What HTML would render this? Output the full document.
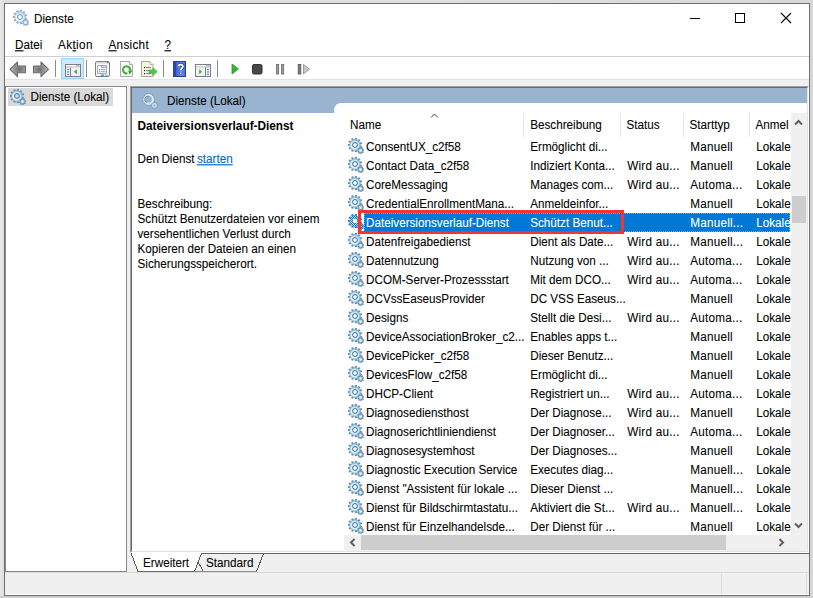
<!DOCTYPE html><html><head><meta charset="utf-8"><style>
html,body{margin:0;padding:0;}
body{width:813px;height:598px;position:relative;overflow:hidden;background:#ececec;font-family:"Liberation Sans",sans-serif;font-size:11.7px;color:#000;}
.a{position:absolute;box-sizing:border-box;}
.t{position:absolute;white-space:nowrap;line-height:13px;transform-origin:0 10.6px;transform:scaleY(1.15);-webkit-text-stroke:0.08px currentColor;}
.ic{position:absolute;}
.sel{color:#fff;}
u{text-decoration:none;border-bottom:1px solid currentColor;}
</style></head><body>
<svg width="0" height="0" style="position:absolute">
<defs>
<radialGradient id="gg" cx="0.45" cy="0.55" r="0.55"><stop offset="0" stop-color="#ffffff"/><stop offset="0.6" stop-color="#d2f1fb"/><stop offset="1" stop-color="#94bcd8"/></radialGradient>
<radialGradient id="gs" cx="0.45" cy="0.45" r="0.6"><stop offset="0" stop-color="#dff1fa"/><stop offset="1" stop-color="#7aa2c0"/></radialGradient>
<symbol id="gear" viewBox="0 0 16 16">
<path d="M11.80,7.00 L11.78,7.38 L14.14,7.93 L13.51,10.07 L11.23,9.26 L11.04,9.60 L10.82,9.91 L12.50,11.64 L10.81,13.11 L9.34,11.19 L8.99,11.37 L8.64,11.51 L9.12,13.88 L6.91,14.20 L6.70,11.79 L6.32,11.75 L5.94,11.68 L5.06,13.93 L3.03,13.01 L4.16,10.87 L3.86,10.63 L3.58,10.36 L1.62,11.78 L0.41,9.91 L2.52,8.72 L2.39,8.35 L2.30,7.98 L-0.11,8.12 L-0.11,5.88 L2.30,6.02 L2.39,5.65 L2.52,5.28 L0.41,4.09 L1.62,2.22 L3.58,3.64 L3.86,3.37 L4.16,3.13 L3.03,0.99 L5.06,0.07 L5.94,2.32 L6.32,2.25 L6.70,2.21 L6.91,-0.20 L9.12,0.12 L8.64,2.49 L8.99,2.63 L9.34,2.81 L10.81,0.89 L12.50,2.36 L10.82,4.09 L11.04,4.40 L11.23,4.74 L13.51,3.93 L14.14,6.07 L11.78,6.62Z M4.6,7 a2.4,2.4 0 1 0 4.8,0 a2.4,2.4 0 1 0 -4.8,0 Z" fill="#6890b2" fill-rule="evenodd"/>
<path d="M1.6,7 a5.4,5.4 0 1 0 10.8,0 a5.4,5.4 0 1 0 -10.8,0 Z M4.6,7 a2.4,2.4 0 1 0 4.8,0 a2.4,2.4 0 1 0 -4.8,0 Z" fill="url(#gg)" fill-rule="evenodd" stroke="#7a9fbd" stroke-width="0.5"/>
<circle cx="7" cy="7" r="2.4" fill="none" stroke="#46709a" stroke-width="0.9"/>
<path d="M14.95,13.08 L14.83,13.48 L15.88,14.09 L15.21,15.08 L14.26,14.34 L13.93,14.60 L13.55,14.80 L13.86,15.97 L12.70,16.20 L12.54,15.00 L12.12,14.95 L11.72,14.83 L11.11,15.88 L10.12,15.21 L10.86,14.26 L10.60,13.93 L10.40,13.55 L9.23,13.86 L9.00,12.70 L10.20,12.54 L10.25,12.12 L10.37,11.72 L9.32,11.11 L9.99,10.12 L10.94,10.86 L11.27,10.60 L11.65,10.40 L11.34,9.23 L12.50,9.00 L12.66,10.20 L13.08,10.25 L13.48,10.37 L14.09,9.32 L15.08,9.99 L14.34,10.94 L14.60,11.27 L14.80,11.65 L15.97,11.34 L16.20,12.50 L15.00,12.66Z" fill="#5f88ac"/>
<circle cx="12.6" cy="12.6" r="2.5" fill="url(#gs)" stroke="#5f88ac" stroke-width="0.7"/>
<circle cx="12.6" cy="12.6" r="0.9" fill="#fff"/>
</symbol>
<pattern id="chk" patternUnits="userSpaceOnUse" width="2" height="2"><rect x="0" y="0" width="1" height="1" fill="#0078d7"/><rect x="1" y="1" width="1" height="1" fill="#0078d7"/></pattern>
<symbol id="gearsel" viewBox="0 0 16 16">
<use href="#gear"/>
<path d="M11.80,7.00 L11.78,7.38 L14.14,7.93 L13.51,10.07 L11.23,9.26 L11.04,9.60 L10.82,9.91 L12.50,11.64 L10.81,13.11 L9.34,11.19 L8.99,11.37 L8.64,11.51 L9.12,13.88 L6.91,14.20 L6.70,11.79 L6.32,11.75 L5.94,11.68 L5.06,13.93 L3.03,13.01 L4.16,10.87 L3.86,10.63 L3.58,10.36 L1.62,11.78 L0.41,9.91 L2.52,8.72 L2.39,8.35 L2.30,7.98 L-0.11,8.12 L-0.11,5.88 L2.30,6.02 L2.39,5.65 L2.52,5.28 L0.41,4.09 L1.62,2.22 L3.58,3.64 L3.86,3.37 L4.16,3.13 L3.03,0.99 L5.06,0.07 L5.94,2.32 L6.32,2.25 L6.70,2.21 L6.91,-0.20 L9.12,0.12 L8.64,2.49 L8.99,2.63 L9.34,2.81 L10.81,0.89 L12.50,2.36 L10.82,4.09 L11.04,4.40 L11.23,4.74 L13.51,3.93 L14.14,6.07 L11.78,6.62Z M4.6,7 a2.4,2.4 0 1 0 4.8,0 a2.4,2.4 0 1 0 -4.8,0 Z" fill="url(#chk)" fill-rule="evenodd"/>
<path d="M1.6,7 a5.4,5.4 0 1 0 10.8,0 a5.4,5.4 0 1 0 -10.8,0 Z M4.6,7 a2.4,2.4 0 1 0 4.8,0 a2.4,2.4 0 1 0 -4.8,0 Z" fill="url(#chk)" fill-rule="evenodd"/>
<path d="M14.95,13.08 L14.83,13.48 L15.88,14.09 L15.21,15.08 L14.26,14.34 L13.93,14.60 L13.55,14.80 L13.86,15.97 L12.70,16.20 L12.54,15.00 L12.12,14.95 L11.72,14.83 L11.11,15.88 L10.12,15.21 L10.86,14.26 L10.60,13.93 L10.40,13.55 L9.23,13.86 L9.00,12.70 L10.20,12.54 L10.25,12.12 L10.37,11.72 L9.32,11.11 L9.99,10.12 L10.94,10.86 L11.27,10.60 L11.65,10.40 L11.34,9.23 L12.50,9.00 L12.66,10.20 L13.08,10.25 L13.48,10.37 L14.09,9.32 L15.08,9.99 L14.34,10.94 L14.60,11.27 L14.80,11.65 L15.97,11.34 L16.20,12.50 L15.00,12.66Z" fill="url(#chk)"/>
<circle cx="12.6" cy="12.6" r="2.5" fill="url(#chk)"/>
<circle cx="7" cy="7" r="2.3" fill="#fff"/>
</symbol>
</defs></svg><div class="a" style="left:0;top:0;width:813px;height:598px;background:linear-gradient(90deg,#e8e8e8,#dedede 4px,#e0e0e0 50%,#d8d8d8)"></div>
<div class="a" style="left:810px;top:0;width:3px;height:598px;background:#d6d6d6"></div>
<div class="a" style="left:0;top:596px;width:813px;height:2px;background:#cdcdcd"></div>
<div class="a" style="left:4px;top:3px;width:806px;height:593px;border:1px solid #6f6f6f;background:#fff"></div>
<svg class="ic" style="left:13px;top:10px;opacity:0.75" width="16" height="16"><use href="#gear"/></svg>
<div class="t" style="left:34px;top:12.1px;">Dienste</div>
<div class="a" style="left:690px;top:18px;width:10px;height:1px;background:#000"></div>
<div class="a" style="left:735px;top:13px;width:10px;height:10px;border:1px solid #000"></div>
<svg class="ic" style="left:780px;top:12px" width="12" height="12"><path d="M1,1 L11,11 M11,1 L1,11" stroke="#000" stroke-width="1.1"/></svg>
<div class="t" style="left:15px;top:38.0px;"><span style="text-decoration:underline;text-underline-offset:1px">D</span>atei</div>
<div class="t" style="left:58px;top:38.0px;"><span style="letter-spacing:0.4px">Ak<span style="text-decoration:underline;text-underline-offset:1px">t</span>ion</span></div>
<div class="t" style="left:108.5px;top:38.0px;"><span style="letter-spacing:0.3px"><span style="text-decoration:underline;text-underline-offset:1px">A</span>nsicht</span></div>
<div class="t" style="left:164.5px;top:38.0px;"><span style="text-decoration:underline;text-underline-offset:1px">?</span></div>
<div class="a" style="left:5px;top:56px;width:804px;height:1px;background:#cfcfcf"></div>
<div class="a" style="left:5px;top:79px;width:804px;height:1px;background:#e3e3e3"></div>
<div class="a" style="left:5px;top:80px;width:804px;height:515px;background:#f0f0f0"></div>
<div class="a" style="left:5px;top:594px;width:804px;height:1px;background:#fff"></div>
<svg class="ic" style="left:9px;top:61px" width="42" height="17">
<defs><radialGradient id="ag" cx="0.6" cy="0.5" r="0.6"><stop offset="0" stop-color="#6f6f6f"/><stop offset="0.6" stop-color="#9a9a9a"/><stop offset="1" stop-color="#d4d4d4"/></radialGradient><radialGradient id="ag2" cx="0.4" cy="0.5" r="0.6"><stop offset="0" stop-color="#6f6f6f"/><stop offset="0.6" stop-color="#9a9a9a"/><stop offset="1" stop-color="#d4d4d4"/></radialGradient></defs>
<path d="M1,8.3 L8.5,1 L8.5,5 L16.5,5 L16.5,11.8 L8.5,11.8 L8.5,15.7 Z" fill="url(#ag)" stroke="#6a6a6a" stroke-width="1.1" stroke-linejoin="round"/>
<path d="M39.5,8.3 L32,1 L32,5 L24.5,5 L24.5,11.8 L32,11.8 L32,15.7 Z" fill="url(#ag2)" stroke="#6a6a6a" stroke-width="1.1" stroke-linejoin="round"/>
</svg>
<div class="a" style="left:55px;top:60px;width:1px;height:17px;background:#8c8c8c"></div>
<div class="a" style="left:86px;top:60px;width:1px;height:17px;background:#8c8c8c"></div>
<div class="a" style="left:163px;top:60px;width:1px;height:17px;background:#8c8c8c"></div>
<div class="a" style="left:217px;top:60px;width:1px;height:17px;background:#8c8c8c"></div>
<div class="a" style="left:61px;top:58px;width:23px;height:21px;background:#cce8ff;border:1px solid #99d1ff"></div>
<svg class="ic" style="left:65px;top:64px" width="16" height="13">
<rect x="0.5" y="0.5" width="15" height="12" fill="#fff" stroke="#7a7f88"/>
<rect x="1" y="2.6" width="14" height="0.9" fill="#9aa0a8"/>
<rect x="11.5" y="1.2" width="1" height="1" fill="#6a6f78"/><rect x="13.3" y="1.2" width="1" height="1" fill="#6a6f78"/>
<rect x="6" y="3.5" width="9" height="8.5" fill="#f1f1f1"/>
<line x1="5.5" y1="3.5" x2="5.5" y2="12" stroke="#7a7f88"/>
<rect x="2" y="5" width="2.2" height="1.1" fill="#3d7fc6"/><rect x="2" y="7.4" width="2.2" height="1.1" fill="#3d7fc6"/><rect x="2" y="9.8" width="2.2" height="1.1" fill="#3d7fc6"/>
<path d="M11.8,5.2 L9,7.7 L11.8,10.2 Z" fill="#3aa83a"/>
</svg>
<svg class="ic" style="left:94px;top:60px" width="17" height="18">
<rect x="1.5" y="1.5" width="14" height="15" rx="1.5" fill="#fbfbfb" stroke="#7b7f87"/>
<rect x="2" y="2" width="13" height="1.6" fill="#d4d8de"/>
<rect x="13" y="1.6" width="1.5" height="1.5" fill="#5a6a86"/>
<path d="M3.5,5.5 L7.5,5.5 L7.5,7.2 L12.5,7.2 L12.5,13.5 L3.5,13.5 Z" fill="#fff" stroke="#9aa0aa" stroke-width="0.9"/>
<rect x="7.5" y="5.5" width="5" height="1.7" fill="#f2f3f5" stroke="#9aa0aa" stroke-width="0.9"/>
<rect x="5" y="9" width="1.3" height="1.3" fill="#22aaf0"/><rect x="7" y="9.2" width="4.5" height="0.9" fill="#8a8f99"/>
<rect x="5" y="11.2" width="1.3" height="1.2" fill="#8a8f99"/><rect x="7" y="11.3" width="4.5" height="0.9" fill="#8a8f99"/>
<rect x="7" y="14.5" width="3.2" height="1.6" fill="#23b0f0"/><rect x="11" y="14.5" width="3" height="1.6" fill="#b8bcc2"/>
</svg>
<svg class="ic" style="left:119px;top:60px" width="16" height="18">
<path d="M1.5,1.5 L10.5,1.5 L13.5,4.5 L13.5,16.5 L1.5,16.5 Z" fill="#fbfbfb" stroke="#a8a8a8"/>
<path d="M10.5,1.5 L10.5,4.5 L13.5,4.5" fill="#fff" stroke="#b0b0b0"/>
<path d="M11.1,10.3 A3.6,3.6 0 1 0 8.4,13.3" fill="none" stroke="#3ab53a" stroke-width="2.1"/>
<path d="M9.2,10.6 L13.6,10.2 L10.6,14.8 Z" fill="#2ea52e"/>
</svg>
<svg class="ic" style="left:140px;top:60px" width="19" height="18">
<path d="M1.5,1.5 L10,1.5 L13,4.5 L13,16.5 L1.5,16.5 Z" fill="#fbf5dc" stroke="#a9a79c"/>
<path d="M10,1.5 L10,4.5 L13,4.5" fill="#fff" stroke="#b5b3a8"/>
<rect x="4" y="7" width="1.2" height="1.2" fill="#2a2a2a"/><rect x="6" y="7.1" width="5" height="1" fill="#7b7ba6"/>
<rect x="4" y="10" width="1.2" height="1.2" fill="#2a2a2a"/><rect x="6" y="10.1" width="5" height="1" fill="#7b7ba6"/>
<rect x="4" y="13" width="1.2" height="1.2" fill="#2a2a2a"/><rect x="6" y="13.1" width="5" height="1" fill="#7b7ba6"/>
<path d="M9,10 L13,10 L13,7.8 L17.2,11.6 L13,15.4 L13,13.2 L9,13.2 Z" fill="#52c852" stroke="#35a535" stroke-width="0.6" stroke-linejoin="round"/>
</svg>
<svg class="ic" style="left:173px;top:61px" width="13" height="16">
<defs><linearGradient id="hg" x1="0" y1="0" x2="1" y2="0"><stop offset="0" stop-color="#3d63c9"/><stop offset="0.6" stop-color="#6f92e4"/><stop offset="1" stop-color="#4a6fd0"/></linearGradient></defs>
<rect x="0" y="0" width="13" height="16" fill="#1f3d9c"/>
<rect x="3" y="1" width="9" height="14" fill="url(#hg)"/>
<rect x="0" y="0" width="3" height="16" fill="#2646a8"/>
<path d="M5.3,5.2 C5.3,3 9.9,3 9.9,5.4 C9.9,7.2 7.7,7.3 7.7,9.6" fill="none" stroke="#203a8a" stroke-width="3"/>
<path d="M5.3,5.2 C5.3,3 9.9,3 9.9,5.4 C9.9,7.2 7.7,7.3 7.7,9.6" fill="none" stroke="#fff" stroke-width="1.7"/>
<circle cx="7.7" cy="12.3" r="1.4" fill="#203a8a"/><circle cx="7.7" cy="12.3" r="0.9" fill="#fff"/>
</svg>
<svg class="ic" style="left:195px;top:64px" width="16" height="13">
<rect x="0.5" y="0.5" width="15" height="12" fill="#fff" stroke="#7a7f88"/>
<rect x="1" y="2.6" width="14" height="0.9" fill="#9aa0a8"/>
<rect x="11.5" y="1.2" width="1" height="1" fill="#6a6f78"/><rect x="13.3" y="1.2" width="1" height="1" fill="#6a6f78"/>
<rect x="1" y="3.5" width="9" height="8.5" fill="#f1f1f1"/>
<line x1="10.5" y1="3.5" x2="10.5" y2="12" stroke="#7a7f88"/>
<rect x="11.8" y="5" width="2.2" height="1.1" fill="#3d7fc6"/><rect x="11.8" y="7.4" width="2.2" height="1.1" fill="#3d7fc6"/><rect x="11.8" y="9.8" width="2.2" height="1.1" fill="#3d7fc6"/>
<path d="M4.2,5.2 L7,7.7 L4.2,10.2 Z" fill="#3aa83a"/>
</svg>
<svg class="ic" style="left:228px;top:62px" width="84" height="14">
<path d="M4,2 L10.5,7 L4,12 Z" fill="#36b336" stroke="#239a23" stroke-width="0.8" stroke-linejoin="round"/>
<rect x="24.5" y="2.5" width="9.5" height="9.5" rx="1.5" fill="#484848" stroke="#333"/>
<rect x="48.5" y="2.5" width="2.2" height="9.5" fill="#9a9a9a" stroke="#6a6a6a" stroke-width="0.8"/>
<rect x="53.5" y="2.5" width="2.2" height="9.5" fill="#9a9a9a" stroke="#6a6a6a" stroke-width="0.8"/>
<rect x="70.2" y="2.5" width="2.6" height="9.5" fill="#7a7a7a" stroke="#555" stroke-width="0.8"/>
<path d="M75.5,2.5 L81.5,7.2 L75.5,12 Z" fill="#c8c8c8" stroke="#8a8a8a" stroke-width="0.8" stroke-linejoin="round"/>
</svg>
<div class="a" style="left:5px;top:86px;width:122px;height:486px;border:1px solid #828790;background:#fff"></div>
<div class="a" style="left:8px;top:88px;width:105px;height:18px;background:#d9d9d9"></div>
<svg class="ic" style="left:10px;top:89px;" width="16" height="16"><use href="#gear"/></svg>
<div class="t" style="left:30.5px;top:90.2px;">Dienste (Lokal)</div>
<div class="a" style="left:130px;top:86px;width:679px;height:467px;border-top:1px solid #a0a0a0;border-left:1px solid #a0a0a0;border-right:1px solid #fff;border-bottom:1px solid #fff"></div>
<div class="a" style="left:131px;top:87px;width:677px;height:465px;border-top:1px solid #696969;border-left:1px solid #696969;border-right:1px solid #e3e3e3;border-bottom:1px solid #e3e3e3;background:#fff"></div>
<div class="a" style="left:132px;top:88px;width:675px;height:25px;background:#99b4d1"></div>
<div class="a" style="left:334px;top:103px;width:473px;height:12px;background:#fff;border-top-left-radius:7px"></div>
<svg class="ic" style="left:140px;top:90px" width="22" height="22">
<path d="M14.00,9.40 L13.95,10.10 L14.90,10.55 L14.63,11.55 L13.59,11.47 L13.28,12.10 L12.88,12.69 L13.48,13.54 L12.74,14.28 L11.89,13.68 L11.30,14.08 L10.67,14.39 L10.75,15.43 L9.75,15.70 L9.30,14.75 L8.60,14.80 L7.90,14.75 L7.45,15.70 L6.45,15.43 L6.53,14.39 L5.90,14.08 L5.31,13.68 L4.46,14.28 L3.72,13.54 L4.32,12.69 L3.92,12.10 L3.61,11.47 L2.57,11.55 L2.30,10.55 L3.25,10.10 L3.20,9.40 L3.25,8.70 L2.30,8.25 L2.57,7.25 L3.61,7.33 L3.92,6.70 L4.32,6.11 L3.72,5.26 L4.46,4.52 L5.31,5.12 L5.90,4.72 L6.53,4.41 L6.45,3.37 L7.45,3.10 L7.90,4.05 L8.60,4.00 L9.30,4.05 L9.75,3.10 L10.75,3.37 L10.67,4.41 L11.30,4.72 L11.89,5.12 L12.74,4.52 L13.48,5.26 L12.88,6.11 L13.28,6.70 L13.59,7.33 L14.63,7.25 L14.90,8.25 L13.95,8.70Z" fill="#7391b4"/>
<circle cx="8.6" cy="9.4" r="5.4" fill="#99b4d1"/>
<circle cx="8.6" cy="9.4" r="4.3" fill="none" stroke="#d6f1fb" stroke-width="2"/>
<path d="M7,12.4 A3.1,3.1 0 0 1 8.6,6.3 L9.5,6.4" fill="none" stroke="#74808f" stroke-width="0.9"/>
<path d="M17.05,15.92 L16.90,16.40 L17.66,16.91 L17.09,17.76 L16.33,17.25 L15.94,17.57 L15.49,17.81 L15.66,18.70 L14.66,18.90 L14.49,18.00 L13.98,17.95 L13.50,17.80 L12.99,18.56 L12.14,17.99 L12.65,17.23 L12.33,16.84 L12.09,16.39 L11.20,16.56 L11.00,15.56 L11.90,15.39 L11.95,14.88 L12.10,14.40 L11.34,13.89 L11.91,13.04 L12.67,13.55 L13.06,13.23 L13.51,12.99 L13.34,12.10 L14.34,11.90 L14.51,12.80 L15.02,12.85 L15.50,13.00 L16.01,12.24 L16.86,12.81 L16.35,13.57 L16.67,13.96 L16.91,14.41 L17.80,14.24 L18.00,15.24 L17.10,15.41Z" fill="#6f8db0"/>
<circle cx="14.5" cy="15.4" r="2.6" fill="#99b4d1"/>
<circle cx="14.5" cy="15.4" r="1.8" fill="none" stroke="#cfe6f2" stroke-width="1.1"/>
</svg>
<div class="t" style="left:167px;top:94.0px;">Dienste (Lokal)</div>
<div class="t" style="left:137.5px;top:120.2px;font-weight:bold;font-size:11.8px;-webkit-text-stroke:0">Dateiversionsverlauf-Dienst</div>
<div class="t" style="left:137.5px;top:151.8px;"><span style="word-spacing:-0.8px">Den Dienst </span><span style="color:#0066cc;text-decoration:underline">starten</span></div>
<div class="t" style="left:137.5px;top:197.2px;">Beschreibung:</div>
<div class="t" style="left:137.5px;top:212.2px;">Schützt Benutzerdateien vor einem</div>
<div class="t" style="left:137.5px;top:227.2px;">versehentlichen Verlust durch</div>
<div class="t" style="left:137.5px;top:242.2px;">Kopieren der Dateien an einen</div>
<div class="t" style="left:137.5px;top:257.2px;">Sicherungsspeicherort.</div>
<div class="t" style="left:350px;top:117.9px;">Name</div>
<svg class="ic" style="left:430px;top:112px" width="10" height="7"><path d="M1,5.5 L4.5,2 L8,5.5" fill="none" stroke="#3a3a3a" stroke-width="1"/></svg>
<div class="a" style="left:523px;top:113px;width:1px;height:24px;background:#e5e5e5"></div>
<div class="a" style="left:620px;top:113px;width:1px;height:24px;background:#e5e5e5"></div>
<div class="a" style="left:683px;top:113px;width:1px;height:24px;background:#e5e5e5"></div>
<div class="a" style="left:749px;top:113px;width:1px;height:24px;background:#e5e5e5"></div>
<div class="t" style="left:530.2px;top:117.9px;">Beschreibung</div>
<div class="t" style="left:626.5px;top:117.9px;">Status</div>
<div class="t" style="left:689.5px;top:117.9px;">Starttyp</div>
<div class="t" style="left:755.5px;top:117.9px;">Anmel</div>
<div class="a" style="left:344px;top:137px;width:447px;height:398px;overflow:hidden">
<svg class="ic" style="left:4px;top:1px;" width="16" height="16"><use href="#gear"/></svg>
<div class="t" style="left:22.0px;top:3.2px;">ConsentUX_c2f58</div>
<div class="t" style="left:186.20000000000005px;top:3.2px;">Ermöglicht di...</div>
<div class="t" style="left:346.2px;top:3.2px;letter-spacing:0.25px;">Manuell</div>
<div class="t" style="left:412.2px;top:3.2px;">Lokale</div>
<svg class="ic" style="left:4px;top:20px;" width="16" height="16"><use href="#gear"/></svg>
<div class="t" style="left:22.0px;top:22.2px;">Contact Data_c2f58</div>
<div class="t" style="left:186.20000000000005px;top:22.2px;">Indiziert Konta...</div>
<div class="t" style="left:283.2px;top:22.2px;letter-spacing:0.25px;">Wird au...</div>
<div class="t" style="left:346.2px;top:22.2px;letter-spacing:0.25px;">Manuell</div>
<div class="t" style="left:412.2px;top:22.2px;">Lokale</div>
<svg class="ic" style="left:4px;top:39px;" width="16" height="16"><use href="#gear"/></svg>
<div class="t" style="left:22.0px;top:41.2px;">CoreMessaging</div>
<div class="t" style="left:186.20000000000005px;top:41.2px;">Manages com...</div>
<div class="t" style="left:283.2px;top:41.2px;letter-spacing:0.25px;">Wird au...</div>
<div class="t" style="left:346.2px;top:41.2px;letter-spacing:0.25px;">Automa...</div>
<div class="t" style="left:412.2px;top:41.2px;">Lokale</div>
<svg class="ic" style="left:4px;top:58px;" width="16" height="16"><use href="#gear"/></svg>
<div class="t" style="left:22.0px;top:60.2px;">CredentialEnrollmentMana...</div>
<div class="t" style="left:186.20000000000005px;top:60.2px;">Anmeldeinfor...</div>
<div class="t" style="left:346.2px;top:60.2px;letter-spacing:0.25px;">Manuell</div>
<div class="t" style="left:412.2px;top:60.2px;">Lokale</div>
<div class="a" style="left:20px;top:76px;width:426px;height:19px;background:#0078d7;outline:1px dotted #ff8728;outline-offset:-1px"></div>
<svg class="ic" style="left:4px;top:77px;" width="16" height="16"><use href="#gearsel"/></svg>
<div class="t sel" style="left:22.0px;top:79.2px;">Dateiversionsverlauf-Dienst</div>
<div class="t sel" style="left:186.20000000000005px;top:79.2px;">Schützt Benut...</div>
<div class="t sel" style="left:346.2px;top:79.2px;letter-spacing:0.25px;">Manuell...</div>
<div class="t sel" style="left:412.2px;top:79.2px;">Lokale</div>
<svg class="ic" style="left:4px;top:96px;" width="16" height="16"><use href="#gear"/></svg>
<div class="t" style="left:22.0px;top:98.2px;">Datenfreigabedienst</div>
<div class="t" style="left:186.20000000000005px;top:98.2px;">Dient als Date...</div>
<div class="t" style="left:283.2px;top:98.2px;letter-spacing:0.25px;">Wird au...</div>
<div class="t" style="left:346.2px;top:98.2px;letter-spacing:0.25px;">Manuell...</div>
<div class="t" style="left:412.2px;top:98.2px;">Lokale</div>
<svg class="ic" style="left:4px;top:115px;" width="16" height="16"><use href="#gear"/></svg>
<div class="t" style="left:22.0px;top:117.2px;">Datennutzung</div>
<div class="t" style="left:186.20000000000005px;top:117.2px;">Nutzung von ...</div>
<div class="t" style="left:283.2px;top:117.2px;letter-spacing:0.25px;">Wird au...</div>
<div class="t" style="left:346.2px;top:117.2px;letter-spacing:0.25px;">Automa...</div>
<div class="t" style="left:412.2px;top:117.2px;">Lokale</div>
<svg class="ic" style="left:4px;top:134px;" width="16" height="16"><use href="#gear"/></svg>
<div class="t" style="left:22.0px;top:136.2px;">DCOM-Server-Prozessstart</div>
<div class="t" style="left:186.20000000000005px;top:136.2px;">Mit dem DCO...</div>
<div class="t" style="left:283.2px;top:136.2px;letter-spacing:0.25px;">Wird au...</div>
<div class="t" style="left:346.2px;top:136.2px;letter-spacing:0.25px;">Automa...</div>
<div class="t" style="left:412.2px;top:136.2px;">Lokale</div>
<svg class="ic" style="left:4px;top:153px;" width="16" height="16"><use href="#gear"/></svg>
<div class="t" style="left:22.0px;top:155.2px;">DCVssEaseusProvider</div>
<div class="t" style="left:186.20000000000005px;top:155.2px;">DC VSS Easeus...</div>
<div class="t" style="left:346.2px;top:155.2px;letter-spacing:0.25px;">Manuell</div>
<div class="t" style="left:412.2px;top:155.2px;">Lokale</div>
<svg class="ic" style="left:4px;top:172px;" width="16" height="16"><use href="#gear"/></svg>
<div class="t" style="left:22.0px;top:174.2px;">Designs</div>
<div class="t" style="left:186.20000000000005px;top:174.2px;">Stellt die Desi...</div>
<div class="t" style="left:283.2px;top:174.2px;letter-spacing:0.25px;">Wird au...</div>
<div class="t" style="left:346.2px;top:174.2px;letter-spacing:0.25px;">Automa...</div>
<div class="t" style="left:412.2px;top:174.2px;">Lokale</div>
<svg class="ic" style="left:4px;top:191px;" width="16" height="16"><use href="#gear"/></svg>
<div class="t" style="left:22.0px;top:193.2px;">DeviceAssociationBroker_c2...</div>
<div class="t" style="left:186.20000000000005px;top:193.2px;">Enables apps t...</div>
<div class="t" style="left:346.2px;top:193.2px;letter-spacing:0.25px;">Manuell</div>
<div class="t" style="left:412.2px;top:193.2px;">Lokale</div>
<svg class="ic" style="left:4px;top:210px;" width="16" height="16"><use href="#gear"/></svg>
<div class="t" style="left:22.0px;top:212.2px;">DevicePicker_c2f58</div>
<div class="t" style="left:186.20000000000005px;top:212.2px;">Dieser Benutz...</div>
<div class="t" style="left:346.2px;top:212.2px;letter-spacing:0.25px;">Manuell</div>
<div class="t" style="left:412.2px;top:212.2px;">Lokale</div>
<svg class="ic" style="left:4px;top:229px;" width="16" height="16"><use href="#gear"/></svg>
<div class="t" style="left:22.0px;top:231.2px;">DevicesFlow_c2f58</div>
<div class="t" style="left:186.20000000000005px;top:231.2px;">Ermöglicht di...</div>
<div class="t" style="left:346.2px;top:231.2px;letter-spacing:0.25px;">Manuell</div>
<div class="t" style="left:412.2px;top:231.2px;">Lokale</div>
<svg class="ic" style="left:4px;top:248px;" width="16" height="16"><use href="#gear"/></svg>
<div class="t" style="left:22.0px;top:250.2px;">DHCP-Client</div>
<div class="t" style="left:186.20000000000005px;top:250.2px;">Registriert un...</div>
<div class="t" style="left:283.2px;top:250.2px;letter-spacing:0.25px;">Wird au...</div>
<div class="t" style="left:346.2px;top:250.2px;letter-spacing:0.25px;">Automa...</div>
<div class="t" style="left:412.2px;top:250.2px;">Lokale</div>
<svg class="ic" style="left:4px;top:267px;" width="16" height="16"><use href="#gear"/></svg>
<div class="t" style="left:22.0px;top:269.2px;">Diagnosediensthost</div>
<div class="t" style="left:186.20000000000005px;top:269.2px;">Der Diagnose...</div>
<div class="t" style="left:283.2px;top:269.2px;letter-spacing:0.25px;">Wird au...</div>
<div class="t" style="left:346.2px;top:269.2px;letter-spacing:0.25px;">Manuell</div>
<div class="t" style="left:412.2px;top:269.2px;">Lokale</div>
<svg class="ic" style="left:4px;top:286px;" width="16" height="16"><use href="#gear"/></svg>
<div class="t" style="left:22.0px;top:288.2px;">Diagnoserichtliniendienst</div>
<div class="t" style="left:186.20000000000005px;top:288.2px;">Der Diagnoser...</div>
<div class="t" style="left:283.2px;top:288.2px;letter-spacing:0.25px;">Wird au...</div>
<div class="t" style="left:346.2px;top:288.2px;letter-spacing:0.25px;">Automa...</div>
<div class="t" style="left:412.2px;top:288.2px;">Lokale</div>
<svg class="ic" style="left:4px;top:305px;" width="16" height="16"><use href="#gear"/></svg>
<div class="t" style="left:22.0px;top:307.2px;">Diagnosesystemhost</div>
<div class="t" style="left:186.20000000000005px;top:307.2px;">Der Diagnoses...</div>
<div class="t" style="left:346.2px;top:307.2px;letter-spacing:0.25px;">Manuell</div>
<div class="t" style="left:412.2px;top:307.2px;">Lokale</div>
<svg class="ic" style="left:4px;top:324px;" width="16" height="16"><use href="#gear"/></svg>
<div class="t" style="left:22.0px;top:326.2px;">Diagnostic Execution Service</div>
<div class="t" style="left:186.20000000000005px;top:326.2px;">Executes diag...</div>
<div class="t" style="left:346.2px;top:326.2px;letter-spacing:0.25px;">Manuell...</div>
<div class="t" style="left:412.2px;top:326.2px;">Lokale</div>
<svg class="ic" style="left:4px;top:343px;" width="16" height="16"><use href="#gear"/></svg>
<div class="t" style="left:22.0px;top:345.2px;">Dienst &quot;Assistent für lokale ...</div>
<div class="t" style="left:186.20000000000005px;top:345.2px;">Dieser Dienst ...</div>
<div class="t" style="left:346.2px;top:345.2px;letter-spacing:0.25px;">Manuell...</div>
<div class="t" style="left:412.2px;top:345.2px;">Lokale</div>
<svg class="ic" style="left:4px;top:362px;" width="16" height="16"><use href="#gear"/></svg>
<div class="t" style="left:22.0px;top:364.2px;">Dienst für Bildschirmtastatu...</div>
<div class="t" style="left:186.20000000000005px;top:364.2px;">Aktiviert die St...</div>
<div class="t" style="left:283.2px;top:364.2px;letter-spacing:0.25px;">Wird au...</div>
<div class="t" style="left:346.2px;top:364.2px;letter-spacing:0.25px;">Manuell...</div>
<div class="t" style="left:412.2px;top:364.2px;">Lokale</div>
<svg class="ic" style="left:4px;top:381px;" width="16" height="16"><use href="#gear"/></svg>
<div class="t" style="left:22.0px;top:383.2px;">Dienst für Einzelhandelsde...</div>
<div class="t" style="left:186.20000000000005px;top:383.2px;">Der Dienst für ...</div>
<div class="t" style="left:346.2px;top:383.2px;letter-spacing:0.25px;">Manuell</div>
<div class="t" style="left:412.2px;top:383.2px;">Lokale</div>
</div>
<div class="a" style="left:358px;top:210px;width:266px;height:24px;border:3px solid #f73232"></div>
<div class="a" style="left:791px;top:113px;width:16px;height:422px;background:#f0f0f0"></div>
<div class="a" style="left:792px;top:196px;width:14px;height:27px;background:#cdcdcd"></div>
<svg class="ic" style="left:794px;top:118px" width="10" height="8"><path d="M1,6.5 L4.5,3 L8,6.5" fill="none" stroke="#606060" stroke-width="2"/></svg>
<svg class="ic" style="left:794px;top:522px" width="10" height="8"><path d="M1,1.5 L4.5,5 L8,1.5" fill="none" stroke="#606060" stroke-width="2"/></svg>
<div class="a" style="left:344px;top:535px;width:463px;height:16px;background:#f0f0f0"></div>
<div class="a" style="left:361px;top:535px;width:365px;height:15px;background:#cdcdcd"></div>
<svg class="ic" style="left:348px;top:538px" width="8" height="10"><path d="M6.5,1 L3,4.5 L6.5,8" fill="none" stroke="#606060" stroke-width="2"/></svg>
<svg class="ic" style="left:778px;top:538px" width="8" height="10"><path d="M1.5,1 L5,4.5 L1.5,8" fill="none" stroke="#606060" stroke-width="2"/></svg>
<svg class="ic" style="left:127px;top:550px" width="682" height="23" shape-rendering="crispEdges">
<path d="M75,3.5 L136,3.5 L129,21.5 L68,21.5 L72,12 Z" fill="#f0f0f0"/>
<rect x="74" y="3" width="608" height="1" fill="#646464"/>
<path d="M136.5,3.5 L129.5,21.5" stroke="#5a5a5a" stroke-width="1"/>
<path d="M74.5,3.5 L71,12 L76.5,21.5" fill="none" stroke="#5a5a5a" stroke-width="1"/>
<path d="M11,21.5 L4,3 L67,3 L74.5,3.5 L67.5,21.5 Z" fill="#fff"/>
<path d="M4,3 L11,21.5" fill="none" stroke="#5a5a5a" stroke-width="1"/>
<path d="M67.5,21.5 L74.5,3.5" fill="none" stroke="#5a5a5a" stroke-width="1"/>
<rect x="11" y="21" width="57" height="1" fill="#6a6a6a"/>
<rect x="68" y="21" width="62" height="1" fill="#8f8f8f"/>
</svg>
<div class="t" style="left:143px;top:556.0px;">Erweitert</div>
<div class="t" style="left:206px;top:556.0px;">Standard</div>
<div class="a" style="left:5px;top:572px;width:804px;height:1px;background:#dadada"></div>
<div class="a" style="left:721px;top:574px;width:1px;height:20px;background:#dadada"></div>
<div class="a" style="left:806px;top:574px;width:1px;height:20px;background:#dadada"></div>
</body></html>
